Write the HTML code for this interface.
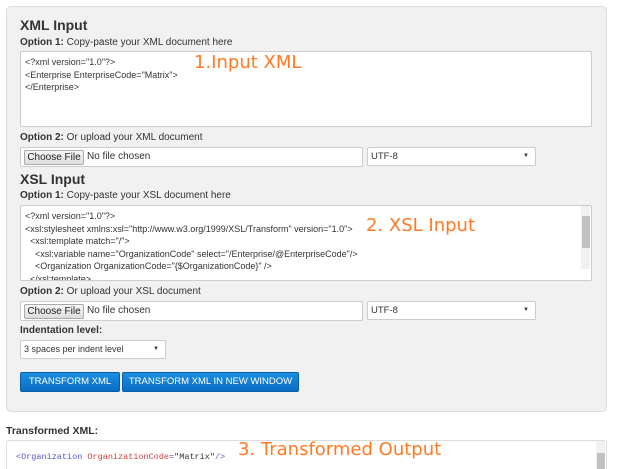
<!DOCTYPE html>
<html><head><meta charset="utf-8"><style>
*{box-sizing:border-box}
html,body{margin:0;width:624px;height:469px;overflow:hidden;background:#fff}
body{font-family:"Liberation Sans",Arial,sans-serif;color:#333;position:relative}
.a{position:absolute}
.panel{left:6px;top:6px;width:601px;height:406px;background:#f1f1f1;border:1px solid #ddd;border-radius:5px}
h2{position:absolute;margin:0;font-size:14px;font-weight:bold;color:#333}
.lbl{position:absolute;font-size:10px;color:#333}
.lbl b{font-weight:bold}
.ta{position:absolute;background:#fff;border:1px solid #ccc;border-radius:2px;font-size:9px;line-height:12.6px;padding:4px 4px;color:#333;white-space:pre;overflow:hidden}
.file{position:absolute;background:#fff;border:1px solid #ccc;border-radius:2px;font-size:10px}
.btnf{position:absolute;left:3px;top:2px;width:60px;height:15px;border:1px solid #aaa;background:linear-gradient(#f6f6f6,#ddd);border-radius:2px;font-size:10px;text-align:center;line-height:13px;color:#222}
.sel{position:absolute;background:#fff;border:1px solid #ccc;border-radius:2px;font-size:9.5px;padding:3px 3px;color:#333}
.sel:after{content:"▼";position:absolute;right:6px;top:5px;font-size:6px}
.btn{position:absolute;height:20px;background:linear-gradient(#1b8fe0,#0a6cc4);border:1px solid #0a5ea8;border-radius:2px;color:#fff;font-size:9.5px;text-align:center;line-height:18px}
.ann{position:absolute;color:#ff7a22;font-family:"Comic Sans MS","DejaVu Sans",sans-serif;font-size:18px;white-space:nowrap}
.sb{position:absolute;width:9px;background:#f1f1f1}
</style></head><body>
<div class="a panel"></div>
<h2 style="left:20px;top:17px">XML Input</h2>
<div class="lbl" style="left:20px;top:37px"><b>Option 1:</b> Copy-paste your XML document here</div>
<div class="ta" style="left:20px;top:51px;width:572px;height:76px">&lt;?xml version="1.0"?&gt;
&lt;Enterprise EnterpriseCode="Matrix"&gt;
&lt;/Enterprise&gt;</div>
<div class="ann" style="left:194px;top:52px">1.Input XML</div>
<div class="lbl" style="left:20px;top:132px"><b>Option 2:</b> Or upload your XML document</div>
<div class="file" style="left:20px;top:147px;width:343px;height:20px"><div class="btnf">Choose File</div><span style="position:absolute;left:66px;top:3px">No file chosen</span></div>
<div class="sel" style="left:367px;top:147px;width:169px;height:19px">UTF-8</div>
<h2 style="left:20px;top:171px">XSL Input</h2>
<div class="lbl" style="left:20px;top:190px"><b>Option 1:</b> Copy-paste your XSL document here</div>
<div class="ta" style="left:20px;top:205px;width:572px;height:76px">&lt;?xml version="1.0"?&gt;
&lt;xsl:stylesheet xmlns:xsl="http://www.w3.org/1999/XSL/Transform" version="1.0"&gt;
  &lt;xsl:template match="/"&gt;
    &lt;xsl:variable name="OrganizationCode" select="/Enterprise/@EnterpriseCode"/&gt;
    &lt;Organization OrganizationCode="{$OrganizationCode}" /&gt;
  &lt;/xsl:template&gt;</div>
<div class="sb" style="left:581px;top:206px;height:63px"></div>
<div class="a" style="left:582px;top:216px;width:8px;height:32px;background:#c1c1c1"></div>
<div class="ann" style="left:366px;top:215px">2. XSL Input</div>
<div class="lbl" style="left:20px;top:286px"><b>Option 2:</b> Or upload your XSL document</div>
<div class="file" style="left:20px;top:301px;width:343px;height:20px"><div class="btnf">Choose File</div><span style="position:absolute;left:66px;top:3px">No file chosen</span></div>
<div class="sel" style="left:367px;top:301px;width:169px;height:19px">UTF-8</div>
<div class="lbl" style="left:20px;top:325px;font-weight:bold">Indentation level:</div>
<div class="sel" style="left:20px;top:340px;width:146px;height:19px;font-size:9px">3 spaces per indent level</div>
<div class="btn" style="left:20px;top:372px;width:100px">TRANSFORM XML</div>
<div class="btn" style="left:122px;top:372px;width:177px">TRANSFORM XML IN NEW WINDOW</div>
<div class="lbl" style="left:6px;top:425px;font-weight:bold;font-size:10.5px">Transformed XML:</div>
<div class="a" style="left:6px;top:440px;width:601px;height:40px;background:#fff;border:1px solid #ddd;border-radius:3px"></div>
<div class="a" style="left:16px;top:452px;font-family:'Liberation Mono',monospace;font-size:8.5px;color:#5555cc;white-space:pre">&lt;Organization <span style="color:#d04040">OrganizationCode</span>=<span style="color:#333">"Matrix"</span>/&gt;</div>
<div class="ann" style="left:238px;top:439px">3. Transformed Output</div>
<div class="sb" style="left:596px;top:441px;height:28px"></div>
<div class="a" style="left:597px;top:453px;width:8px;height:16px;background:#c1c1c1"></div>
</body></html>
